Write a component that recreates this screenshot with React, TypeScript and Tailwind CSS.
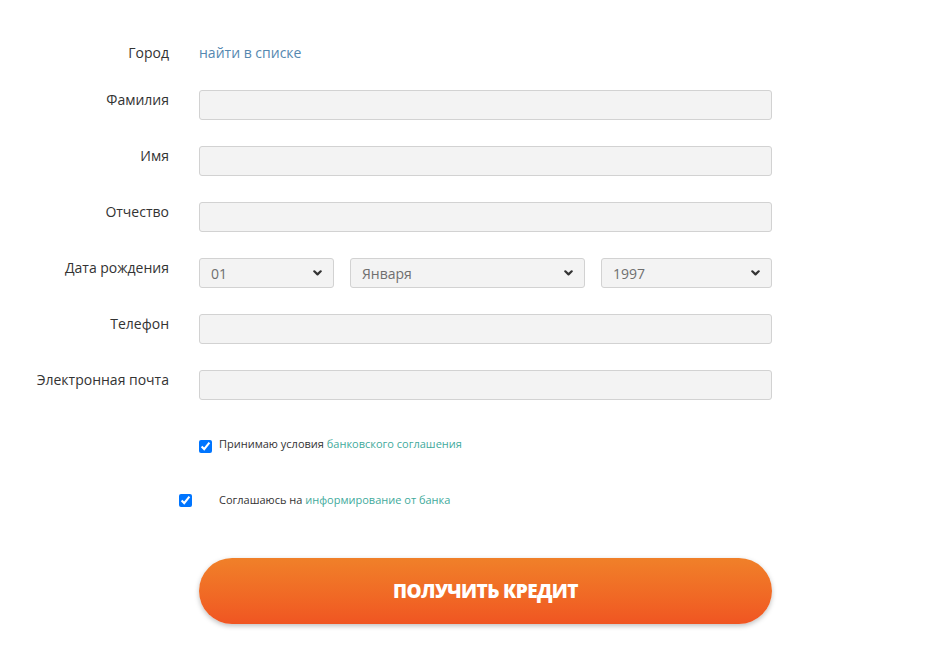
import React from 'react';

const Chevron: React.FC = () => (
  <svg
    className="pointer-events-none absolute right-[12px] top-1/2 -translate-y-1/2"
    width="9"
    height="6"
    viewBox="0 0 9 6"
    fill="none"
  >
    <path d="M1.3 1.3 4.5 4.4l3.2-3.1" stroke="#333" strokeWidth="2.2" strokeLinecap="round" strokeLinejoin="round" />
  </svg>
);

const Field: React.FC<{ label: string; children: React.ReactNode }> = ({ label, children }) => (
  <div className="grid grid-cols-[169px_573px] gap-x-[30px]">
    <div className="text-right text-[14px] leading-[20px] text-[#333]">{label}</div>
    <div className="h-[30px]">{children}</div>
  </div>
);

const TextInput: React.FC = () => (
  <input
    type="text"
    className="h-[30px] w-full rounded-[3px] border border-[#d2d2d2] bg-[#f3f3f3] px-[12px] text-[14px] text-[#666] outline-none"
  />
);

const Select: React.FC<{ value: string; width: string; options: string[] }> = ({ value, width, options }) => (
  <div className={`relative h-[30px] ${width}`}>
    <select
      defaultValue={value}
      className="h-[30px] w-full appearance-none rounded-[3px] border border-[#d2d2d2] bg-[#f3f3f3] pl-[11px] pr-[28px] text-[14px] text-[#6f6f6f] outline-none"
    >
      {options.map((o) => (
        <option key={o}>{o}</option>
      ))}
    </select>
    <Chevron />
  </div>
);

const App: React.FC = () => {
  return (
    <div className="min-h-[654px] w-[951px] bg-white font-['Open_Sans',sans-serif]">
      <div className="flex flex-col pt-[43px]">
        {/* Город */}
        <div className="grid grid-cols-[169px_573px] gap-x-[30px]">
          <div className="text-right text-[14px] leading-[20px] text-[#333]">Город</div>
          <a href="#" className="text-[14px] leading-[20px] text-[#5588b0]">
            найти в списке
          </a>
        </div>

        <div className="mt-[27px] flex flex-col gap-[26px]">
          <Field label="Фамилия">
            <TextInput />
          </Field>
          <Field label="Имя">
            <TextInput />
          </Field>
          <Field label="Отчество">
            <TextInput />
          </Field>
          <Field label="Дата рождения">
            <div className="flex gap-[16px]">
              <Select value="01" width="w-[135px]" options={['01', '02', '03']} />
              <Select value="Января" width="w-[235px]" options={['Января', 'Февраля', 'Марта']} />
              <Select value="1997" width="w-[171px]" options={['1997', '1998', '1999']} />
            </div>
          </Field>
          <Field label="Телефон">
            <TextInput />
          </Field>
          <Field label="Электронная почта">
            <TextInput />
          </Field>
        </div>

        {/* Соглашения */}
        <div className="mt-[40px] flex items-center pl-[199px]">
          <input type="checkbox" defaultChecked className="m-0 h-[13px] w-[13px] accent-[#0075ff]" />
          <span className="-mt-[5px] ml-[7px] text-[11px] leading-[16px] text-[#333]">
            Принимаю условия <a href="#" className="text-[#3faa9c]">банковского соглашения</a>
          </span>
        </div>

        <div className="mt-[39px] flex items-center pl-[179px]">
          <input type="checkbox" defaultChecked className="m-0 h-[13px] w-[13px] accent-[#0075ff]" />
          <span className="ml-[27px] text-[11px] leading-[16px] text-[#333]">
            Соглашаюсь на <a href="#" className="text-[#3faa9c]">информирование от банка</a>
          </span>
        </div>

        <div className="mt-[50px] pl-[199px]">
          <button
            type="button"
            className="flex h-[66px] w-[573px] items-center justify-center rounded-full bg-gradient-to-b from-[#f08029] to-[#f05522] text-[19px] font-extrabold uppercase tracking-[-0.6px] text-white shadow-[0_2px_5px_rgba(0,0,0,0.25)]"
          >
            Получить кредит
          </button>
        </div>
      </div>
    </div>
  );
};

export default App;
